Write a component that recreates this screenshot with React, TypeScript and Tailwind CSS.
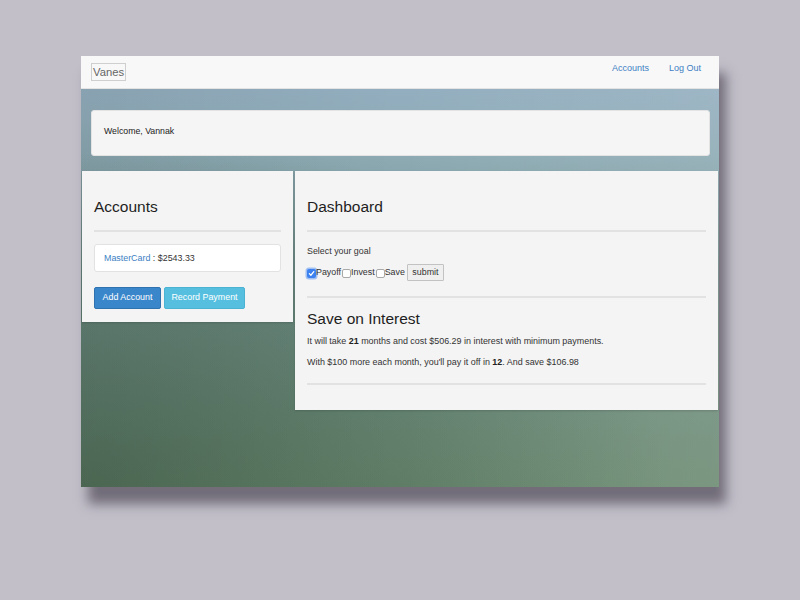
import React from "react";

function Check({ checked }: { checked?: boolean }) {
  if (checked) {
    return (
      <span className="flex w-[9px] h-[9px] rounded-[2px] bg-[#3b82f0] items-center justify-center shadow-[0_0_0_1.5px_rgba(80,140,240,0.5)]">
        <svg width="7" height="7" viewBox="0 0 8 8">
          <path d="M1.5 4.2 L3.3 6 L6.6 1.8" stroke="white" strokeWidth="1.4" fill="none" strokeLinecap="round" strokeLinejoin="round" />
        </svg>
      </span>
    );
  }
  return <span className="block w-[9px] h-[9px] rounded-[2px] bg-white border border-[#a9a9a9]" />;
}

export default function App() {
  return (
    <div
      className="w-[800px] h-[600px] bg-[#c2bfc9] pt-[56px] pl-[81px] text-[#333]"
      style={{ fontFamily: '"Liberation Sans", Arial, sans-serif' }}
    >
      <div className="w-[638px] h-[431px] flex flex-col shadow-[7px_17px_11px_rgba(70,65,78,0.65)]">
        {/* navbar */}
        <div className="h-[33px] bg-[#f8f8f8] border-b border-[#e3e3e3] flex items-center justify-between pl-[10px] pr-[18px]">
          <span className="border border-[#cfcfcf] text-[#666] text-[11.25px] leading-[15px] px-[1px] h-[18px] flex items-center">Vanes</span>
          <div className="flex items-center gap-[20px] text-[9px] text-[#3d7fc4] -mt-[6px]">
            <span>Accounts</span>
            <span>Log Out</span>
          </div>
        </div>
        {/* body */}
        <div className="flex-1 flex flex-col bg-[radial-gradient(ellipse_at_0%_100%,rgba(20,45,30,0.32)_0%,rgba(20,45,30,0)_65%),linear-gradient(90deg,rgba(0,0,0,0.07)_0%,rgba(0,0,0,0)_50%,rgba(255,255,255,0.1)_100%),linear-gradient(180deg,#93aebf_0%,#8eabb5_16%,#72908a_45%,#6c8b72_100%)]">
          <div className="mt-[21px] ml-[10px] w-[619px] h-[46px] bg-[#f5f5f5] border border-[#e3e3e3] rounded-[3px] flex items-center pl-[12px] pb-[3px] text-[8.75px] text-[#222]">
            Welcome, Vannak
          </div>
          <div className="mt-[15px] flex items-start">
            {/* Accounts panel */}
            <div className="ml-[1px] w-[211px] bg-[#f4f4f4] px-[12px] pt-[19px] pb-[13px] shadow-[0_1px_2px_rgba(0,0,0,0.15)]">
              <div className="h-[34px] flex items-center text-[15.5px] text-[#1e1e1e]">Accounts</div>
              <div className="mt-[6px] h-[2px] bg-[#e2e2e2]" />
              <div className="mt-[12px] h-[28px] bg-white border border-[#e2e2e2] rounded-[3px] flex items-center pl-[9px] pt-[1px] text-[8.9px]">
                <span className="text-[#3d7fc4]">MasterCard</span>
                <span className="text-[#333]">&nbsp;: $2543.33</span>
              </div>
              <div className="mt-[15px] flex gap-[3px]">
                <div className="h-[22px] w-[67px] rounded-[2px] bg-[#3a86cb] border border-[#2f72b0] text-white text-[8.9px] flex items-center justify-center">Add Account</div>
                <div className="h-[22px] w-[81px] rounded-[2px] bg-[#56bfe0] border border-[#4ab3d3] text-white text-[8.9px] flex items-center justify-center">Record Payment</div>
              </div>
            </div>
            {/* Dashboard panel */}
            <div className="ml-[2px] w-[423px] bg-[#f4f4f4] px-[12px] pt-[19px] pb-[25px] shadow-[0_1px_2px_rgba(0,0,0,0.15)]">
              <div className="h-[34px] flex items-center text-[15.5px] text-[#1e1e1e]">Dashboard</div>
              <div className="mt-[6px] h-[2px] bg-[#e2e2e2]" />
              <div className="mt-[12px] h-[14px] flex items-center pt-[2px] text-[8.9px] text-[#333]">Select your goal</div>
              <div className="mt-[6px] h-[17px] flex items-center pt-[1px] text-[8.9px] text-[#333]">
                <Check checked />
                <span>Payoff</span>
                <span className="ml-[1px]"><Check /></span>
                <span>Invest</span>
                <span className="ml-[1px]"><Check /></span>
                <span>Save</span>
                <div className="ml-[2px] -mt-[1px] h-[17px] w-[37px] bg-[#efefef] border border-[#c2c2c2] rounded-[1px] flex items-center justify-center">submit</div>
              </div>
              <div className="mt-[15px] h-[2px] bg-[#e2e2e2]" />
              <div className="mt-[11px] h-[20px] flex items-center text-[15.5px] text-[#1e1e1e]">Save on Interest</div>
              <div className="mt-[5px] h-[14px] flex items-center pt-[2px] text-[8.95px] text-[#333] whitespace-pre">
                It will take <b className="text-[#222]">21</b> months and cost $506.29 in interest with minimum payments.
              </div>
              <div className="mt-[7px] h-[14px] flex items-center pt-[2px] text-[8.95px] text-[#333] whitespace-pre">
                With $100 more each month, you'll pay it off in <b className="text-[#222]">12</b>. And save $106.98
              </div>
              <div className="mt-[14px] h-[2px] bg-[#e2e2e2]" />
            </div>
          </div>
        </div>
      </div>
    </div>
  );
}
